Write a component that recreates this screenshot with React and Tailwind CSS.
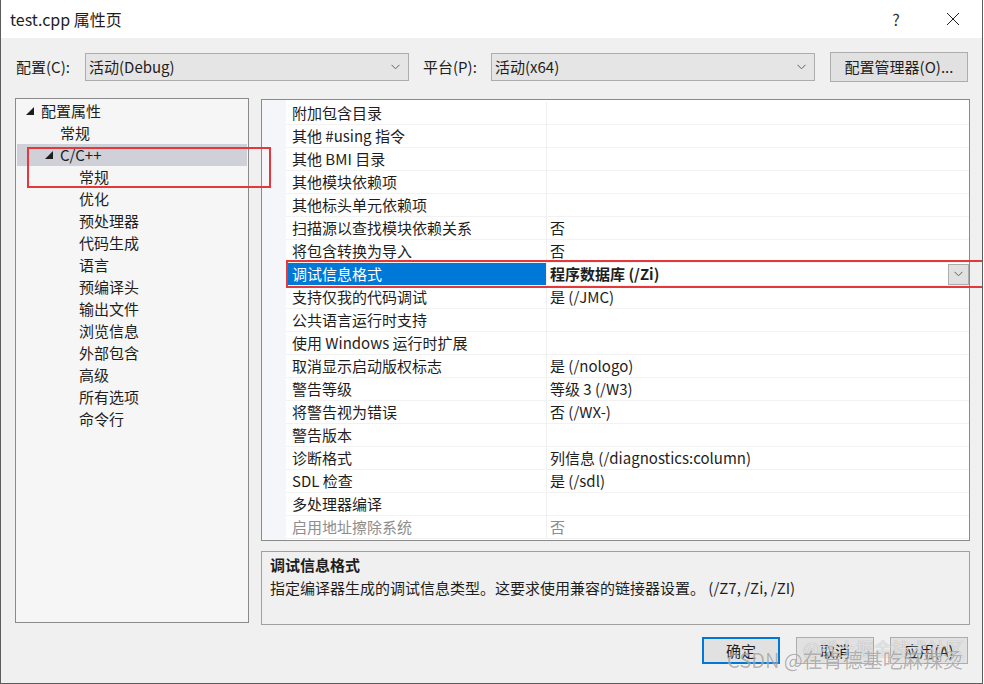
import React from 'react';

const font = { fontFamily: '"Noto Sans CJK SC", "Noto Sans", sans-serif' };

const tree = [
  { label: '配置属性', indent: 'pl-[9px]', arrow: true },
  { label: '常规', indent: 'pl-[43px]' },
  { label: 'C/C++', indent: 'pl-[28px]', arrow: true, active: true },
  { label: '常规', indent: 'pl-[62px]' },
  { label: '优化', indent: 'pl-[62px]' },
  { label: '预处理器', indent: 'pl-[62px]' },
  { label: '代码生成', indent: 'pl-[62px]' },
  { label: '语言', indent: 'pl-[62px]' },
  { label: '预编译头', indent: 'pl-[62px]' },
  { label: '输出文件', indent: 'pl-[62px]' },
  { label: '浏览信息', indent: 'pl-[62px]' },
  { label: '外部包含', indent: 'pl-[62px]' },
  { label: '高级', indent: 'pl-[62px]' },
  { label: '所有选项', indent: 'pl-[62px]' },
  { label: '命令行', indent: 'pl-[62px]' },
];

const props = [
  ['附加包含目录', ''],
  ['其他 #using 指令', ''],
  ['其他 BMI 目录', ''],
  ['其他模块依赖项', ''],
  ['其他标头单元依赖项', ''],
  ['扫描源以查找模块依赖关系', '否'],
  ['将包含转换为导入', '否'],
  ['调试信息格式', '程序数据库 (/Zi)', 'selected'],
  ['支持仅我的代码调试', '是 (/JMC)'],
  ['公共语言运行时支持', ''],
  ['使用 Windows 运行时扩展', ''],
  ['取消显示启动版权标志', '是 (/nologo)'],
  ['警告等级', '等级 3 (/W3)'],
  ['将警告视为错误', '否 (/WX-)'],
  ['警告版本', ''],
  ['诊断格式', '列信息 (/diagnostics:column)'],
  ['SDL 检查', '是 (/sdl)'],
  ['多处理器编译', ''],
  ['启用地址擦除系统', '否', 'disabled'],
];

const Chevron = () => (
  <svg width="9" height="6" viewBox="0 0 9 6" fill="none">
    <path d="M0.5 0.8 L4.5 4.8 L8.5 0.8" stroke="#606060" strokeWidth="1" />
  </svg>
);

const Arrow = () => (
  <svg width="8" height="8" viewBox="0 0 8 8" className="mr-[7px]">
    <path d="M8 0 L8 8 L0 8 Z" fill="#1e1e1e" />
  </svg>
);

const Combo = ({ value }) => (
  <div className="w-[324px] h-[28px] bg-[#e5e5e5] border border-[#adadad] flex items-center justify-between pl-[3px] pr-[8px]">
    <span>{value}</span>
    <Chevron />
  </div>
);

const Btn = ({ children, primary }) => (
  <div
    className={`w-[78px] h-[27px] bg-[#e1e1e1] flex items-center justify-center ${
      primary ? 'border-2 border-[#0078d7]' : 'border border-[#adadad]'
    }`}
  >
    {children}
  </div>
);

export default function App() {
  return (
    <div
      style={font}
      className="relative w-[983px] h-[684px] flex flex-col bg-[#f0f0f0] border-l border-r border-b border-[#5c5c5c] text-[15px] leading-[22px] text-[#1e1e1e] overflow-hidden"
    >
      {/* title bar */}
      <div className="h-[38px] bg-white flex items-center justify-between pl-[9px] shrink-0">
        <span className="text-[16px]">test.cpp 属性页</span>
        <div className="flex items-center h-full">
          <span className="w-[56px] text-center text-[16px] text-[#333]">?</span>
          <div className="w-[58px] flex justify-center">
            <svg width="14" height="14" viewBox="0 0 14 14">
              <path d="M1 1 L13 13 M13 1 L1 13" stroke="#222" strokeWidth="1" />
            </svg>
          </div>
        </div>
      </div>

      <div className="flex-1 flex flex-col pl-[14px]">
        {/* config row */}
        <div className="mt-[14px] h-[30px] flex items-center">
          <span className="w-[70px] pl-[1px]">配置(C):</span>
          <Combo value="活动(Debug)" />
          <span className="w-[82px] pl-[14px]">平台(P):</span>
          <Combo value="活动(x64)" />
          <div className="ml-[15px] w-[138px] h-[30px] bg-[#e1e1e1] border border-[#adadad] flex items-center justify-center">
            配置管理器(O)...
          </div>
        </div>

        {/* main area */}
        <div className="mt-[16px] flex items-start">
          {/* tree */}
          <div className="w-[234px] h-[525px] bg-[#f6f6f6] border border-[#8a8a8a] pt-[1px] px-[1px]">
            {tree.map((t, i) => (
              <div
                key={i}
                className={`h-[22px] flex items-center ${t.indent} ${t.active ? 'bg-[#cfd0d8]' : ''}`}
              >
                {t.arrow && <Arrow />}
                <span>{t.label}</span>
              </div>
            ))}
          </div>

          {/* right column */}
          <div className="ml-[12px] mt-[1px] w-[709px] flex flex-col">
            <div className="h-[442px] bg-white border border-[#8a8a8a] flex">
              <div className="w-[24px] bg-[#f4f6fa] shrink-0" />
              <div className="flex-1 pt-[2px]">
                {props.map(([label, value, state], i) => {
                  const selected = state === 'selected';
                  const disabled = state === 'disabled';
                  return (
                    <div key={i} className="h-[23px] flex border-b border-[#f2f2f2]">
                      <div
                        className={`w-[261px] shrink-0 pl-[6px] flex items-center border-r border-[#f0f0f0] ${
                          selected ? 'bg-[#0078d7] text-white' : disabled ? 'text-[#8d8d8d]' : ''
                        }`}
                      >
                        {label}
                      </div>
                      <div
                        className={`flex-1 pl-[3px] flex items-center justify-between ${
                          selected ? 'font-bold' : disabled ? 'text-[#8d8d8d]' : ''
                        }`}
                      >
                        <span>{value}</span>
                        {selected && (
                          <div className="w-[21px] h-[21px] bg-[#e1e1e1] border border-[#adadad] flex items-center justify-center">
                            <Chevron />
                          </div>
                        )}
                      </div>
                    </div>
                  );
                })}
              </div>
            </div>

            <div className="mt-[10px] h-[74px] border border-[#a0a0a0] pl-[8px] pt-[2px]">
              <div className="font-bold">调试信息格式</div>
              <div className="mt-[1px]">指定编译器生成的调试信息类型。这要求使用兼容的链接器设置。 (/Z7, /Zi, /ZI)</div>
            </div>
          </div>
        </div>

        {/* buttons */}
        <div className="mt-[12px] flex justify-end gap-[16px] pr-[14px]">
          <Btn primary>确定</Btn>
          <Btn>取消</Btn>
          <Btn>应用(A)</Btn>
        </div>
      </div>

      {/* annotation boxes */}
      <div className="absolute left-[26px] top-[147px] w-[244px] h-[41px] border-2 border-[#e5383b] pointer-events-none" />
      <div className="absolute left-[285px] top-[260px] w-[700px] h-[28px] border-2 border-[#e5383b] pointer-events-none" />

      {/* watermarks */}
      <div className="absolute left-[802px] top-[637px] text-[18px] text-white/70 pointer-events-none [text-shadow:0_0_1px_rgba(0,0,0,0.35)]">
        @稀土掘金技术社区
      </div>
      <div className="absolute left-[726px] top-[649px] text-[20px] text-black/30 pointer-events-none [text-shadow:0_0_1px_rgba(255,255,255,0.8)]">
        CSDN @在肯德基吃麻辣烫
      </div>
    </div>
  );
}
